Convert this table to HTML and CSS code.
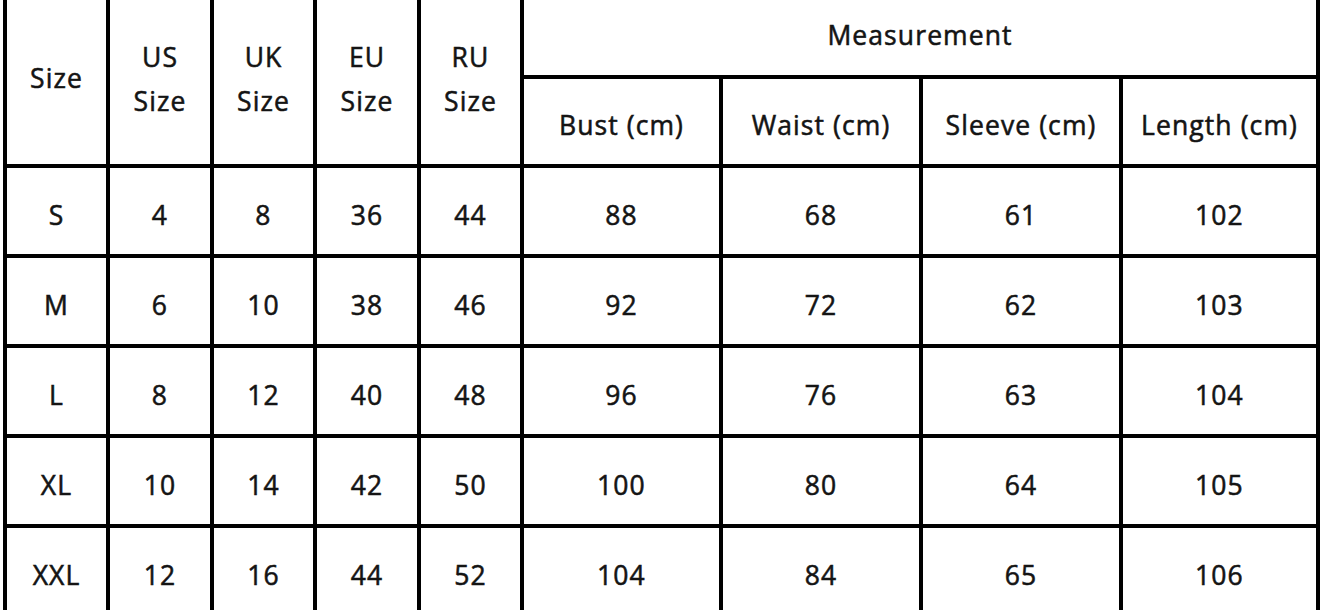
FILE: index.html
```html
<!DOCTYPE html>
<html lang="en">
<head>
<meta charset="utf-8">
<title>Size Chart</title>
<link rel="stylesheet" href="styles.css">
</head>
<body>
<div class="chart">
  <div class="cell head tall">Size</div>
  <div class="cell head tall two">US<br>Size</div>
  <div class="cell head tall two">UK<br>Size</div>
  <div class="cell head tall two">EU<br>Size</div>
  <div class="cell head tall two">RU<br>Size</div>
  <div class="cell head wide measure">Measurement</div>
  <div class="cell head sub">Bust (cm)</div>
  <div class="cell head sub">Waist (cm)</div>
  <div class="cell head sub">Sleeve (cm)</div>
  <div class="cell head sub">Length (cm)</div>

  <div class="cell">S</div><div class="cell">4</div><div class="cell">8</div><div class="cell">36</div><div class="cell">44</div><div class="cell">88</div><div class="cell">68</div><div class="cell">61</div><div class="cell">102</div>
  <div class="cell">M</div><div class="cell">6</div><div class="cell">10</div><div class="cell">38</div><div class="cell">46</div><div class="cell">92</div><div class="cell">72</div><div class="cell">62</div><div class="cell">103</div>
  <div class="cell">L</div><div class="cell">8</div><div class="cell">12</div><div class="cell">40</div><div class="cell">48</div><div class="cell">96</div><div class="cell">76</div><div class="cell">63</div><div class="cell">104</div>
  <div class="cell">XL</div><div class="cell">10</div><div class="cell">14</div><div class="cell">42</div><div class="cell">50</div><div class="cell">100</div><div class="cell">80</div><div class="cell">64</div><div class="cell">105</div>
  <div class="cell">XXL</div><div class="cell">12</div><div class="cell">16</div><div class="cell">44</div><div class="cell">52</div><div class="cell">104</div><div class="cell">84</div><div class="cell">65</div><div class="cell">106</div>
</div>
</body>
</html>
```
FILE: styles.css
```css
html, body {
  margin: 0;
  padding: 0;
  background: #ffffff;
  overflow: hidden;
}

body {
  width: 1320px;
  height: 610px;
}

.chart {
  margin-left: 3px;
  width: 1309px;
  display: grid;
  grid-template-columns: 99px 100px 99px 100px 99px 195px 196px 196px 193px;
  grid-template-rows: 75px 85px 86px 86px 86px 86px 86px;
  gap: 4px;
  padding: 0 4px;
  background: #000000;
  font-family: "Open Sans", "Noto Sans", sans-serif;
  font-size: 26.5px;
  letter-spacing: 1.1px;
  color: #141414;
  -webkit-text-stroke: 0.55px #141414;
}

.cell {
  background: #ffffff;
  display: flex;
  align-items: center;
  justify-content: center;
  text-align: center;
  padding-top: 7px;
  box-sizing: border-box;
  line-height: 30px;
}

.head {
  padding-top: 0;
}

.tall {
  grid-row: span 2;
  padding-bottom: 8px;
}

.two {
  line-height: 44px;
  padding-bottom: 6px;
}

.wide {
  grid-column: span 4;
}

.measure {
  padding-bottom: 6px;
}

.sub {
  padding-top: 6px;
}
```
